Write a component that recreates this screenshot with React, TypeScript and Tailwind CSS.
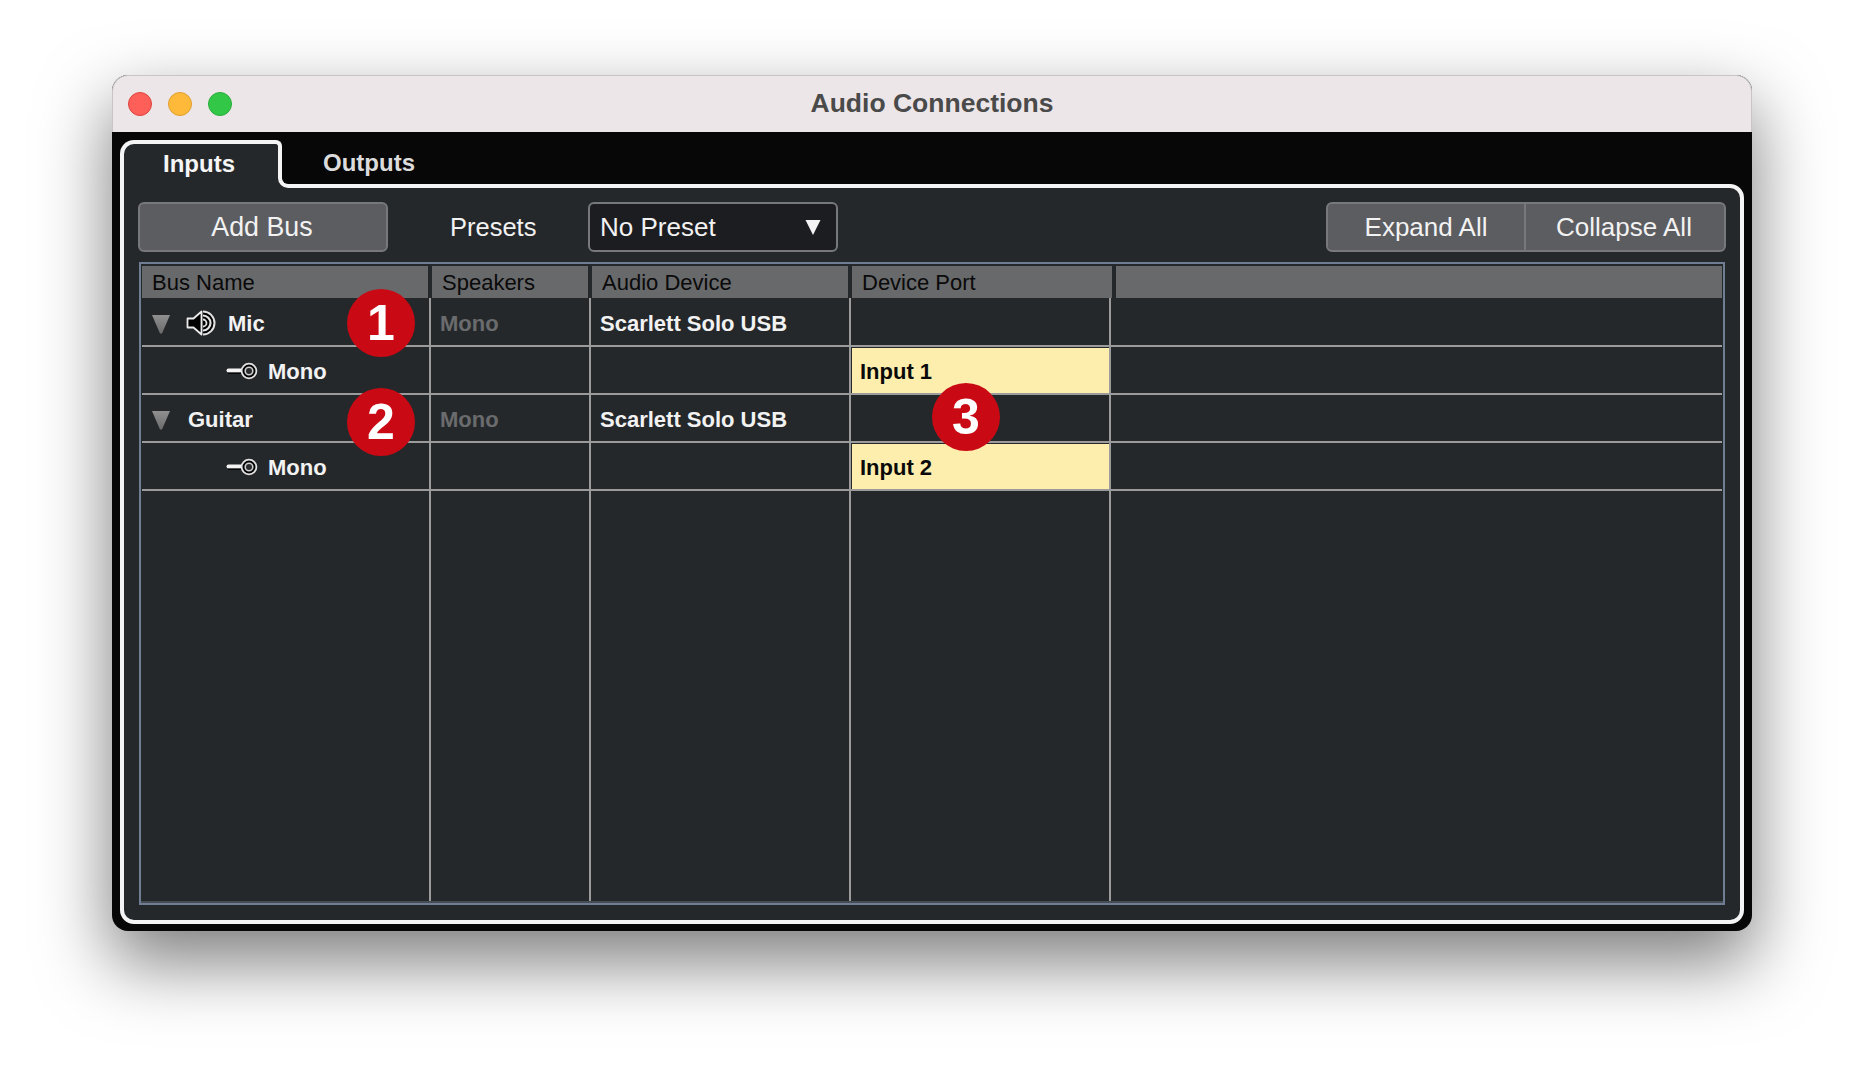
import React from "react";

const sans = "font-['Liberation_Sans',Arial,sans-serif]";

function Triangle() {
  return (
    <svg width="18" height="20" viewBox="0 0 18 20" className="shrink-0">
      <defs>
        <linearGradient id="tri" x1="0" y1="0" x2="0" y2="1">
          <stop offset="0" stopColor="#8f8f8f" />
          <stop offset="1" stopColor="#6c6c6c" />
        </linearGradient>
      </defs>
      <path d="M0 1H18L10 19.5H8Z" fill="url(#tri)" />
    </svg>
  );
}

function SpeakerIcon() {
  return (
    <svg width="32" height="26" viewBox="0 0 32 26" className="shrink-0">
      <path d="M17 1.5A11.5 11.5 0 0 1 17 24.5Z" fill="#000000" />
      <path d="M17 1.5A11.5 11.5 0 0 1 17 24.5" fill="none" stroke="#e2e2e2" strokeWidth="2" />
      <path d="M17 5.5A7.5 7.5 0 0 1 17 20.5" fill="none" stroke="#e2e2e2" strokeWidth="2.2" />
      <path d="M17 9.5A3.5 3.5 0 0 1 17 16.5" fill="none" stroke="#e2e2e2" strokeWidth="1.8" />
      <path d="M1.5 8.5H7.5L15.5 1.5V24.5L7.5 17.5H1.5Z" fill="#000000" stroke="#ececec" strokeWidth="1.8" strokeLinejoin="round" />
    </svg>
  );
}

function PlugIcon() {
  return (
    <svg width="32" height="18" viewBox="0 0 32 18" className="shrink-0">
      <rect x="0.5" y="6.6" width="18" height="4" rx="2" fill="#f4f4f4" />
      <rect x="2" y="10.6" width="15" height="1.2" fill="#000000" />
      <circle cx="23" cy="9" r="7.4" fill="#000000" stroke="#e2e2e2" strokeWidth="1.8" />
      <circle cx="23" cy="9" r="3.8" fill="#2a2c2f" stroke="#cfcfcf" strokeWidth="1.6" />
    </svg>
  );
}

function Light({ color, edge }: { color: string; edge: string }) {
  return <span className="w-6 h-6 rounded-full border" style={{ backgroundColor: color, borderColor: edge }} />;
}

function Row({
  first,
  kind,
  label,
  device,
  port,
  tall,
}: {
  first?: React.ReactNode;
  kind: "bus" | "sub";
  label?: string;
  device?: string;
  port?: string;
  tall?: boolean;
}) {
  const line = "border-b-2 border-[#9b9b9b]";
  const vr = "border-r-2 border-r-[#9b9b9b]";
  const top = tall ? "pt-[3px]" : "pt-[2px]";
  return (
    <div className={`flex shrink-0 ${tall ? "h-[49px]" : "h-[48px]"}`}>
      <div className={`w-[289px] flex items-center ${top} ${line} ${vr}`}>{first}</div>
      <div className={`w-[160px] flex items-center pl-[9px] ${top} ${line} ${vr}`}>
        {kind === "bus" && <span className="text-[22px] font-bold text-[#6a6b6d]">{label}</span>}
      </div>
      <div className={`w-[260px] flex items-center pl-[9px] ${top} ${line} ${vr}`}>
        {device && <span className="text-[22px] font-bold text-[#f2f2f2]">{device}</span>}
      </div>
      <div className={`w-[260px] ${line} ${vr}`}>
        {port && (
          <div className="ml-[1px] mt-[1px] h-[45px] pl-[8px] pt-[1px] flex items-center bg-[#fdeeae] text-[22px] font-bold text-[#0a0a0a]">
            {port}
          </div>
        )}
      </div>
      <div className={`flex-1 ${line}`} />
    </div>
  );
}

function Badge({ n, className }: { n: string; className: string }) {
  return (
    <div className={`absolute w-[68px] h-[68px] rounded-full bg-[#c90a14] flex items-center justify-center text-white font-bold text-[50px] leading-none ${className}`}>
      {n}
    </div>
  );
}

function BusCell({ icon, name, pad }: { icon?: React.ReactNode; name: string; pad: string }) {
  return (
    <div className="flex items-center pl-[10px]">
      <span className="mt-[2px]"><Triangle /></span>
      <div className={`flex items-center ${pad}`}>
        {icon}
        <span className="text-[22px] font-bold text-[#f2f2f2]">{name}</span>
      </div>
    </div>
  );
}

function SubCell() {
  return (
    <div className="flex items-center pl-[84px]">
      <PlugIcon />
      <span className="ml-[10px] text-[22px] font-bold text-[#f2f2f2]">Mono</span>
    </div>
  );
}

export default function App() {
  return (
    <div className={`w-[1864px] h-[1080px] bg-white overflow-hidden pl-[112px] pt-[75px] ${sans}`}>
      <div className="w-[1640px] h-[856px] rounded-[16px] bg-[#070707] flex flex-col shadow-[0_30px_70px_2px_rgba(0,0,0,0.5)]">
        <div className="relative h-[57px] shrink-0 rounded-t-[16px] bg-[#ece6e8] border-t border-x border-[#c9c5c6] flex items-center justify-center">
          <div className="absolute left-[15px] top-[16px] flex gap-4">
            <Light color="#fe5f58" edge="#e0443e" />
            <Light color="#feb93a" edge="#dfa02f" />
            <Light color="#33c748" edge="#2aac3b" />
          </div>
          <span className="text-[26.5px] font-bold text-[#4a4a4a]">Audio Connections</span>
        </div>

        <div className="flex-1 flex flex-col pt-2 px-2 pb-[7px] min-h-0">
          <div className="relative z-10 flex h-[48px] shrink-0 -mb-[4px]">
            <div className="relative w-[162px] h-[48px] border-t-4 border-x-4 border-[#f4f4f4] rounded-tl-[14px] rounded-tr-[6px] bg-[#25282b] flex items-center justify-center pb-[4px] pr-[4px]">
              <span className="text-[24px] font-bold text-[#f6f6f6]">Inputs</span>
              <span className="absolute left-full bottom-0 w-[12px] h-[12px] bg-[#25282b]" />
              <span className="absolute -right-[16px] bottom-0 w-[16px] h-[14px] bg-[#070707] border-l-4 border-b-4 border-[#f4f4f4] rounded-bl-[10px]" />
            </div>
            <div className="ml-[41px] flex items-center pb-[2px]">
              <span className="text-[24px] font-bold text-[#dcdcdc]">Outputs</span>
            </div>
          </div>

          <div className="flex-1 min-h-0 flex flex-col border-4 border-[#f4f4f4] rounded-b-[14px] rounded-tr-[14px] bg-[#25282b] pt-[14px] px-[14px] pb-[15px]">
            <div className="flex items-center h-[50px] shrink-0">
              <div className="w-[250px] h-[50px] flex items-center justify-center pt-[1px] pr-[2px] rounded-[6px] border-2 border-[#77787b] bg-[#5c5d61] text-[26.8px] text-[#f2f2f2]">
                Add Bus
              </div>
              <span className="ml-[62px] w-[138px] text-[25.5px] text-[#f2f2f2]">Presets</span>
              <div className="w-[250px] h-[50px] flex items-center justify-between pl-[10px] pr-[15px] pt-[1px] rounded-[6px] border-2 border-[#77787b] bg-[#1c1d21] text-[26px] text-[#f2f2f2]">
                <span>No Preset</span>
                <svg width="16" height="15" viewBox="0 0 16 15"><path d="M0.5 0H15.5L8 15Z" fill="#f4f4f4" /></svg>
              </div>
              <div className="ml-auto w-[400px] h-[50px] flex rounded-[6px] border-2 border-[#77787b] bg-[#5c5d61] text-[26px] text-[#f2f2f2]">
                <div className="w-[198px] flex items-center justify-center border-r-2 border-[#77787b]">Expand All</div>
                <div className="flex-1 flex items-center justify-center pr-[2px]">Collapse All</div>
              </div>
            </div>

            <div className="relative mt-[10px] ml-[1px] mr-[1px] flex-1 min-h-0 flex flex-col border-2 border-[#6f7e93] bg-[#25282b]">
              <div className="flex-1 min-h-0 flex flex-col pt-[2px] px-[1px] border-b-2 border-b-[#474c54]">
                <div className="flex h-[32px] shrink-0 gap-[4px] text-[22px] text-[#0a0a0a] leading-none">
                  <div className="w-[286px] pl-[10px] pt-[1px] bg-[#68696b] flex items-center">Bus Name</div>
                  <div className="w-[156px] pl-[10px] pt-[1px] bg-[#68696b] flex items-center">Speakers</div>
                  <div className="w-[256px] pl-[10px] pt-[1px] bg-[#68696b] flex items-center">Audio Device</div>
                  <div className="w-[260px] pl-[10px] pt-[1px] bg-[#68696b] flex items-center">Device Port</div>
                  <div className="flex-1 bg-[#68696b]" />
                </div>
                <Row tall kind="bus" label="Mono" device="Scarlett Solo USB" first={<BusCell icon={<span className="mr-[10px]"><SpeakerIcon /></span>} name="Mic" pad="ml-[16px]" />} />
                <Row kind="sub" port="Input 1" first={<SubCell />} />
                <Row kind="bus" label="Mono" device="Scarlett Solo USB" first={<BusCell name="Guitar" pad="ml-[18px]" />} />
                <Row kind="sub" port="Input 2" first={<SubCell />} />
                <div className="flex flex-1 min-h-0">
                  <div className="w-[289px] border-r-2 border-[#9b9b9b]" />
                  <div className="w-[160px] border-r-2 border-[#9b9b9b]" />
                  <div className="w-[260px] border-r-2 border-[#9b9b9b]" />
                  <div className="w-[260px] border-r-2 border-[#9b9b9b]" />
                  <div className="flex-1" />
                </div>
              </div>
              <Badge n="1" className="left-[206px] top-[25px]" />
              <Badge n="2" className="left-[206px] top-[124px]" />
              <Badge n="3" className="left-[791px] top-[119px]" />
            </div>
          </div>
        </div>
      </div>
    </div>
  );
}
